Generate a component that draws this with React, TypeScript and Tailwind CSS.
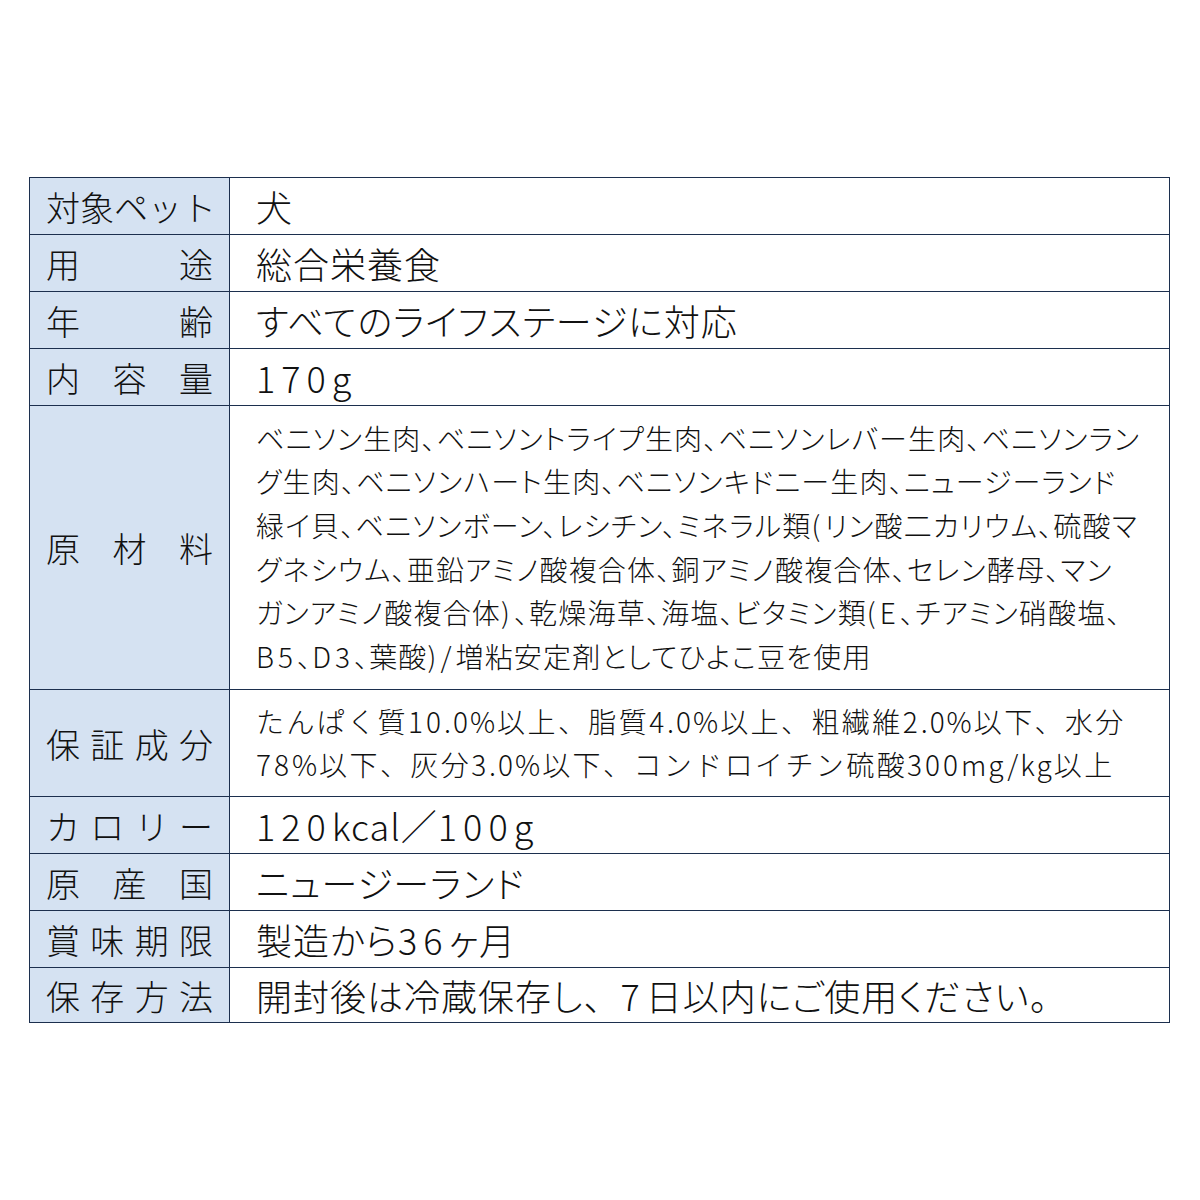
const font = { fontFamily: '"Noto Sans CJK JP", "Noto Sans", sans-serif' }
const palt = { fontFeatureSettings: '"palt"' }
const plain = { fontFeatureSettings: 'normal' }

type Row = { label: string; value: string | string[]; h: string; kind?: 'raw' | 'guar' }

const rows: Row[] = [
  { label: '対象ペット', value: '犬', h: 'h-[57px]' },
  { label: '用途', value: '総合栄養食', h: 'h-[57px]' },
  { label: '年齢', value: 'すべてのライフステージに対応', h: 'h-[57px]' },
  { label: '内容量', value: '170g', h: 'h-[57px]' },
  {
    label: '原材料',
    h: 'h-[284px]',
    kind: 'raw',
    value: [
      'ベニソン生肉、ベニソントライプ生肉、ベニソンレバー生肉、ベニソンラン',
      'グ生肉、ベニソンハート生肉、ベニソンキドニー生肉、ニュージーランド',
      '緑イ貝、ベニソンボーン、レシチン、ミネラル類(リン酸二カリウム、硫酸マ',
      'グネシウム、亜鉛アミノ酸複合体、銅アミノ酸複合体、セレン酵母、マン',
      'ガンアミノ酸複合体)、乾燥海草、海塩、ビタミン類(E、チアミン硝酸塩、',
      'B5、D3、葉酸)/増粘安定剤としてひよこ豆を使用',
    ],
  },
  {
    label: '保証成分',
    h: 'h-[107px]',
    kind: 'guar',
    value: [
      'たんぱく質10.0%以上、脂質4.0%以上、粗繊維2.0%以下、水分',
      '78%以下、灰分3.0%以下、コンドロイチン硫酸300mg/kg以上',
    ],
  },
  { label: 'カロリー', value: '120kcal／100g', h: 'h-[57px]' },
  { label: '原産国', value: 'ニュージーランド', h: 'h-[57px]' },
  { label: '賞味期限', value: '製造から36ヶ月', h: 'h-[57px]' },
  { label: '保存方法', value: '開封後は冷蔵保存し、7日以内にご使用ください。', h: 'h-[54px]' },
]

// split text into runs: digits, other ascii, full-width comma, the rest
function Runs({ text, digit, ascii, comma }: { text: string; digit: string; ascii: string; comma?: boolean }) {
  const parts = text.match(/[0-9]+|[!-~]+|、|[^0-9!-~、]+/g) ?? []
  return (
    <>
      {parts.map((p, i) => {
        if (/^[0-9]+$/.test(p)) return <span key={i} className={digit}>{p}</span>
        if (/^[!-~]+$/.test(p)) return <span key={i} className={ascii}>{p}</span>
        if (p === '、' && comma) return <span key={i} style={plain}>{p}</span>
        return <span key={i}>{p}</span>
      })}
    </>
  )
}

function Label({ text }: { text: string }) {
  return (
    <div className="flex w-[200px] shrink-0 items-center justify-between border-r border-[#1c2f4e] bg-[#d5e2f2] px-[16px] text-[34px] font-light text-[#111]">
      {text.split('').map((c, i) => (
        <span key={i}>{c}</span>
      ))}
    </div>
  )
}

function Value({ row }: { row: Row }) {
  if (row.kind === 'raw') {
    return (
      <div className="text-[28px] leading-[43.6px] font-light tracking-[1.2px] whitespace-nowrap" style={palt}>
        {(row.value as string[]).map((line, j) => (
          <div key={j}>
            <Runs text={line} digit="tracking-[5px]" ascii="tracking-[4px]" />
          </div>
        ))}
      </div>
    )
  }
  if (row.kind === 'guar') {
    return (
      <div className="text-[28px] leading-[43px] font-light tracking-[2.4px] whitespace-nowrap">
        {(row.value as string[]).map((line, j) => (
          <div key={j}>
            <Runs text={line} digit="tracking-[3px]" ascii="tracking-[2px]" />
          </div>
        ))}
      </div>
    )
  }
  return (
    <div className="text-[36px] font-light tracking-[1px] whitespace-nowrap" style={palt}>
      <Runs text={row.value as string} digit="tracking-[6px]" ascii="tracking-[1px]" comma />
    </div>
  )
}

export default function App() {
  return (
    <div className="min-h-[1200px] bg-white pt-[177px]" style={font}>
      <div className="ml-[29px] w-[1141px] border border-[#1c2f4e]">
        {rows.map((r, i) => (
          <div
            key={r.label}
            className={`flex ${r.h} ${i < rows.length - 1 ? 'border-b border-[#1c2f4e]' : ''}`}
          >
            <Label text={r.label} />
            <div className="flex flex-1 items-center pl-[26px] text-[#111]">
              <Value row={r} />
            </div>
          </div>
        ))}
      </div>
    </div>
  )
}
